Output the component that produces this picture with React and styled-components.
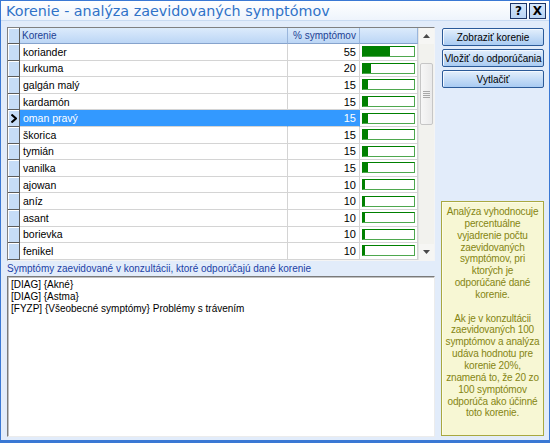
import React from 'react';
import styled, { createGlobalStyle } from 'styled-components';

const GlobalStyle = createGlobalStyle`
  html, body {
    margin: 0;
    padding: 0;
    background: #dfeaf9;
  }
  body {
    font-family: "Liberation Sans", Arial, sans-serif;
    font-size: 10px;
    color: #000000;
  }
`;

const rows = [
  { name: 'koriander', value: 55 },
  { name: 'kurkuma', value: 20 },
  { name: 'galgán malý', value: 15 },
  { name: 'kardamón', value: 15 },
  { name: 'oman pravý', value: 15, selected: true },
  { name: 'škorica', value: 15 },
  { name: 'tymián', value: 15 },
  { name: 'vanilka', value: 15 },
  { name: 'ajowan', value: 10 },
  { name: 'aníz', value: 10 },
  { name: 'asant', value: 10 },
  { name: 'borievka', value: 10 },
  { name: 'fenikel', value: 10 },
];

const symptoms = [
  '[DIAG] {Akné}',
  '[DIAG] {Astma}',
  '[FYZP] {Všeobecné symptómy} Problémy s trávením',
];

const infoLines = [
  'Analýza vyhodnocuje',
  'percentuálne',
  'vyjadrenie počtu',
  'zaevidovaných',
  'symptómov, pri',
  'ktorých je',
  'odporúčané dané',
  'korenie.',
  '',
  'Ak je v konzultácii',
  'zaevidovaných 100',
  'symptómov a analýza',
  'udáva hodnotu pre',
  'korenie 20%,',
  'znamená to, že 20 zo',
  '100 symptómov',
  'odporúča ako účinné',
  'toto korenie.',
];

const Window = styled.div`
  width: 550px;
  height: 443px;
  box-sizing: border-box;
  display: flex;
  flex-direction: column;
  background: #e2ecfa;
  border: 1px solid #3a78d4;
  border-bottom-width: 3px;
`;

const TitleBar = styled.div`
  height: 19px;
  flex: 0 0 19px;
  display: flex;
  align-items: center;
  justify-content: space-between;
  padding-left: 5px;
  padding-right: 3px;
  background: linear-gradient(#ffffff, #eef4fc);
  border-bottom: 1px solid #c9dbf2;
`;

const Title = styled.span`
  font-family: "DejaVu Sans", Verdana, sans-serif;
  font-size: 14.3px;
  color: #2f72c8;
  white-space: nowrap;
`;

const TitleButtons = styled.div`
  display: flex;
  gap: 2px;
`;

const TitleButton = styled.div`
  width: 15px;
  height: 14px;
  display: flex;
  align-items: center;
  justify-content: center;
  background: linear-gradient(#d6e7fb, #b9d4f4);
  border: 1px solid #1d3566;
  font-family: "DejaVu Sans", Verdana, sans-serif;
  font-weight: bold;
  font-size: 12px;
  color: #000000;
`;

const Client = styled.div`
  flex: 1;
  display: flex;
  gap: 6px;
  padding: 6px 5px 3px 6px;
  min-height: 0;
`;

const LeftColumn = styled.div`
  width: 428px;
  display: flex;
  flex-direction: column;
`;

const RightColumn = styled.div`
  flex: 1;
  display: flex;
  flex-direction: column;
  gap: 3px;
  padding-top: 1px;
  padding-bottom: 1px;
  min-width: 0;
`;

const GridFrame = styled.div`
  display: flex;
  background: #ffffff;
  border: 1px solid;
  border-color: #808080 #f4f4f4 #f4f4f4 #808080;
`;

const Table = styled.div`
  width: 410px;
  display: flex;
  flex-direction: column;
`;

const RowBase = styled.div`
  display: grid;
  grid-template-columns: 12px 268px 72px 58px;
`;

const HeaderRow = styled(RowBase)`
  height: 16px;
`;

const Row = styled(RowBase)`
  height: 16.6px;
`;

const Indicator = styled.div`
  box-sizing: border-box;
  background: #c6dcf7;
  border-right: 1px solid #5c5c5c;
  border-bottom: 1px solid #5c5c5c;
  box-shadow: inset 1px 1px 0 #ffffff;
  display: flex;
  align-items: center;
  justify-content: center;
`;

const HeaderCell = styled.div`
  box-sizing: border-box;
  display: flex;
  align-items: center;
  justify-content: ${(props) => (props.center ? 'center' : 'flex-start')};
  padding-left: 2px;
  background: linear-gradient(#dcebfc, #bcd6f5);
  border-right: 1px solid #9ab6dc;
  border-bottom: 1px solid #86a3cc;
  color: #1d3f94;
  white-space: nowrap;
`;

const Cell = styled.div`
  box-sizing: border-box;
  display: flex;
  align-items: center;
  justify-content: ${(props) => (props.right ? 'flex-end' : 'flex-start')};
  padding: 0 3px;
  background: ${(props) => (props.selected ? '#3399ff' : '#ffffff')};
  color: ${(props) => (props.selected ? '#ffffff' : '#000000')};
  border-right: 1px solid ${(props) => (props.selected ? '#3399ff' : '#d4d4d4')};
  border-bottom: 1px solid #d4d4d4;
  font-size: ${(props) => (props.right ? '11px' : '10.5px')};
  white-space: nowrap;
`;

const BarCell = styled.div`
  box-sizing: border-box;
  display: flex;
  align-items: center;
  padding-left: 2px;
  border-right: 1px solid #d4d4d4;
  border-bottom: 1px solid #d4d4d4;
`;

const Bar = styled.div`
  box-sizing: border-box;
  width: 53px;
  height: 11px;
  border: 1px solid #008000;
  border-right-color: #4ea84e;
  border-bottom-color: #4ea84e;
  background: #ffffff;
  display: flex;
`;

const BarFill = styled.div`
  height: 100%;
  background: #008000;
`;

const Scrollbar = styled.div`
  width: 16px;
  display: flex;
  flex-direction: column;
  background: #f2f2ee;
  border-left: 1px solid #e4e4e4;
`;

const ScrollArrow = styled.div`
  height: 16px;
  display: flex;
  align-items: center;
  justify-content: center;
  background: #f6f6f4;
  margin-top: ${(props) => (props.bottom ? 'auto' : '0')};
`;

const Thumb = styled.div`
  margin: 19px 1px 0 1px;
  height: 62px;
  box-sizing: border-box;
  border: 1px solid #c6c6c6;
  border-radius: 2px;
  background: linear-gradient(90deg, #f7f7f7, #eaeaea);
  display: flex;
  align-items: center;
  justify-content: center;
`;

const Label = styled.div`
  height: 15px;
  line-height: 16px;
  color: #1b3fa6;
  white-space: nowrap;
`;

const ListBox = styled.div`
  flex: 1;
  background: #ffffff;
  border: 1px solid;
  border-color: #7a7a7a #ececec #ececec #7a7a7a;
  box-shadow: inset 1px 1px 0 #c0c0c0;
  padding: 2px 3px;
  line-height: 12px;
`;

const ActionButton = styled.div`
  height: 18px;
  box-sizing: border-box;
  display: flex;
  align-items: center;
  justify-content: center;
  border: 1px solid #2b5a98;
  border-radius: 2px;
  background: linear-gradient(#e3effc, #a9cbf2);
  box-shadow: inset 1px 1px 0 #f4f9ff;
  white-space: nowrap;
  margin-left: 1px;
`;

const InfoBox = styled.div`
  margin-top: auto;
  height: 235px;
  box-sizing: border-box;
  border: 1px solid #a8a840;
  box-shadow: inset 1px 1px 0 #fdfde8;
  background: #f7f7d4;
  color: #858512;
  text-align: center;
  padding: 4px 0;
  line-height: 11.85px;
  letter-spacing: -0.15px;
  white-space: nowrap;
  overflow: hidden;
`;

const Arrow = ({ down }) => (
  <svg width="7" height="4" viewBox="0 0 7 4">
    <path d={down ? 'M0 0 H7 L3.5 4 Z' : 'M0 4 H7 L3.5 0 Z'} fill="#4a4a4a" />
  </svg>
);

const Grip = () => (
  <svg width="7" height="7" viewBox="0 0 7 7">
    <path d="M0 0.5 H7 M0 2.5 H7 M0 4.5 H7 M0 6.5 H7" stroke="#a8a8a8" strokeWidth="1" />
  </svg>
);

const Pointer = () => (
  <svg width="6" height="9" viewBox="0 0 6 9">
    <path d="M0.5 0.5 L5 4.5 L0.5 8.5" fill="none" stroke="#000000" strokeWidth="2" />
  </svg>
);

export default function App() {
  return (
    <>
      <GlobalStyle />
      <Window>
        <TitleBar>
          <Title>Korenie - analýza zaevidovaných symptómov</Title>
          <TitleButtons>
            <TitleButton>?</TitleButton>
            <TitleButton>X</TitleButton>
          </TitleButtons>
        </TitleBar>
        <Client>
          <LeftColumn>
            <GridFrame>
              <Table>
                <HeaderRow>
                  <Indicator />
                  <HeaderCell>Korenie</HeaderCell>
                  <HeaderCell center>% symptómov</HeaderCell>
                  <HeaderCell />
                </HeaderRow>
                {rows.map((row) => (
                  <Row key={row.name}>
                    <Indicator>{row.selected && <Pointer />}</Indicator>
                    <Cell selected={row.selected}>{row.name}</Cell>
                    <Cell right selected={row.selected}>{row.value}</Cell>
                    <BarCell>
                      <Bar>
                        <BarFill style={{ width: `${Math.max(row.value * 0.55 - 3.5, 1)}px` }} />
                      </Bar>
                    </BarCell>
                  </Row>
                ))}
              </Table>
              <Scrollbar>
                <ScrollArrow><Arrow /></ScrollArrow>
                <Thumb><Grip /></Thumb>
                <ScrollArrow bottom><Arrow down /></ScrollArrow>
              </Scrollbar>
            </GridFrame>
            <Label>Symptómy zaevidované v konzultácii, ktoré odporúčajú dané korenie</Label>
            <ListBox>
              {symptoms.map((s) => (
                <div key={s}>{s}</div>
              ))}
            </ListBox>
          </LeftColumn>
          <RightColumn>
            <ActionButton>Zobraziť korenie</ActionButton>
            <ActionButton>Vložiť do odporúčania</ActionButton>
            <ActionButton>Vytlačiť</ActionButton>
            <InfoBox>
              {infoLines.map((line, i) => (
                <div key={i}>{line || '\u00a0'}</div>
              ))}
            </InfoBox>
          </RightColumn>
        </Client>
      </Window>
    </>
  );
}
